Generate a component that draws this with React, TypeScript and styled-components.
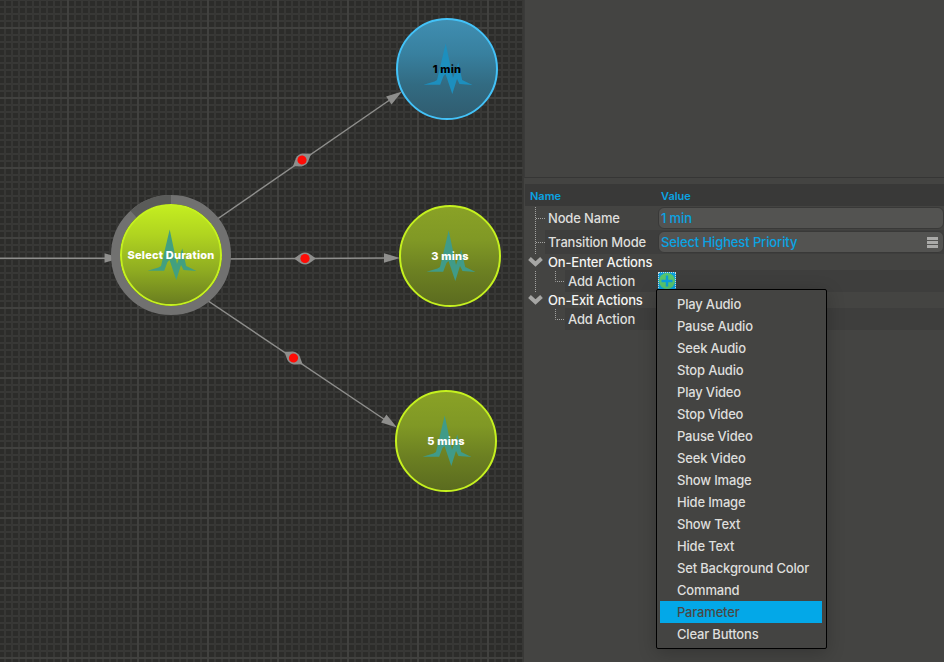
import React from 'react';
import styled, { createGlobalStyle } from 'styled-components';

const GlobalStyle = createGlobalStyle`
  * { box-sizing: border-box; }
  body { margin: 0; background: #444442; overflow: hidden; }
`;

const Window = styled.div`
  display: flex;
  width: 944px;
  height: 662px;
  overflow: hidden;
  font-family: Inter, 'Liberation Sans', sans-serif;
`;

const Canvas = styled.main`
  position: relative;
  flex: 0 0 524px;
  overflow: hidden;
  border-right: 1px solid #393937;
  background-color: #2c2c2a;
  background-image:
    linear-gradient(90deg, #41413f 2px, transparent 2px),
    linear-gradient(#41413f 2px, transparent 2px),
    linear-gradient(90deg, #373735 2px, transparent 2px),
    linear-gradient(#383836 2px, transparent 2px);
  background-size: 70px 70px, 70px 70px, 7px 7px, 7px 7px;
  background-position: 67px 27px, 67px 27px, 4px 6px, 4px 6px;
`;

const Edges = styled.svg`
  position: absolute;
  inset: 0;
`;

const Node = styled.div<{ $x: number; $y: number; $tone: 'blue' | 'olive' | 'lime' }>`
  position: absolute;
  left: ${p => p.$x - 51}px;
  top: ${p => p.$y - 51}px;
  width: 102px;
  height: 102px;
  display: flex;
  align-items: center;
  justify-content: center;
  border-radius: 50%;
  border: 2px solid ${p => (p.$tone === 'blue' ? '#43c2f8' : '#c5f11f')};
  background: ${p =>
    ({
      blue: 'linear-gradient(#408fb2, #38809f 35%, #326b82 65%, #305b6e)',
      olive: 'linear-gradient(#8aa226, #809825 35%, #6c8022 65%, #5a6a1f)',
      lime: 'linear-gradient(#c5ef20, #b0d420 30%, #8fac21 65%, #687b20)',
    })[p.$tone]} border-box;
  color: ${p => (p.$tone === 'blue' ? '#000' : '#fff')};
`;

const PulseIcon = styled.svg`
  position: absolute;
  inset: -2px;
`;

const NodeLabel = styled.span`
  position: relative;
  font-size: 11px;
  line-height: 14px;
  font-weight: 800;
  letter-spacing: 0.22px;
  white-space: nowrap;
`;

const Inspector = styled.aside`
  position: relative;
  flex: 1;
  display: flex;
  flex-direction: column;
  background: #444442;
  color: #dededc;
  font-size: 13px;
  font-weight: 500;
  letter-spacing: -0.12px;
`;

const Preview = styled.div`
  height: 178px;
  border-bottom: 1px solid #363635;
  border-left: 1px solid #3b3b3a;
`;

const TableHead = styled.div`
  display: grid;
  grid-template-columns: 131px 1fr;
  align-items: center;
  height: 22px;
  margin: 6px 0 0 1px;
  padding: 2px 0 0 5px;
  background: #393938;
  color: #0aa3e3;
  font-size: 11px;
  font-weight: 600;
  line-height: 20px;
  letter-spacing: 0;
`;

const Row = styled.div<{ $height: number; $indent: number; $dark?: boolean }>`
  display: flex;
  align-items: center;
  height: ${p => p.$height}px;
  margin-left: ${p => p.$indent - 3}px;
  background: ${p => (p.$dark ? '#3e3e3d' : 'transparent')};
`;

const RowName = styled.span<{ $indent: number; $bright?: boolean }>`
  flex: 0 0 ${p => 133 - p.$indent}px;
  margin-left: 3px;
  margin-top: -1px;
  line-height: 16px;
  letter-spacing: -0.16px;
  white-space: nowrap;
  color: ${p => (p.$bright ? '#f4f4f2' : '#dededc')};
`;

const Field = styled.div`
  flex: 1;
  display: flex;
  align-items: center;
  justify-content: space-between;
  height: 22px;
  padding: 0 5px 1px 2px;
  border: 1px solid #393938;
  border-radius: 6px;
  background: #535351;
  color: #0aa3e3;
`;

const MenuBars = styled.span`
  width: 11px;
  height: 11px;
  margin-top: 1px;
  background: repeating-linear-gradient(#aaaaa8 0 3px, transparent 3px 4px);
`;

const TreeLines = styled.svg`
  position: absolute;
  left: 0;
  top: 206px;
`;

const AddButton = styled.button`
  display: flex;
  align-items: center;
  justify-content: center;
  width: 18px;
  height: 18px;
  padding: 0;
  border: 1px dotted #c8d8de;
  background: #0a9fdd;
`;

const AddIcon = styled.svg`
  flex: none;
  display: block;
`;

const Menu = styled.ul`
  position: absolute;
  left: 132px;
  top: 289px;
  width: 171px;
  height: 360px;
  margin: 0;
  padding: 3px;
  list-style: none;
  border: 1px solid #000;
  border-radius: 2px;
  background: #444442;
  box-shadow: 0 4px 18px rgba(0, 0, 0, 0.22);
`;

const MenuItem = styled.li<{ $active?: boolean }>`
  height: 22px;
  padding-left: 17px;
  margin-right: 1px;
  line-height: 22px;
  letter-spacing: -0.18px;
  white-space: nowrap;
  background: ${p => (p.$active ? '#03a8e8' : 'transparent')};
  color: ${p => (p.$active ? '#484846' : '#dededc')};
`;

const actions = [
  'Play Audio', 'Pause Audio', 'Seek Audio', 'Stop Audio', 'Play Video', 'Stop Video',
  'Pause Video', 'Seek Video', 'Show Image', 'Hide Image', 'Show Text', 'Hide Text',
  'Set Background Color', 'Command', 'Parameter', 'Clear Buttons',
];

function Pulse({ color }: { color: string }) {
  return (
    <PulseIcon width="102" height="102">
      <path
        d="M27.5 66.8 L38.5 63.6 L41 62 L49.7 25.5 L57 60 L62.3 44.5 L66.2 62 L76.5 67 L63.5 66 L61 61 L56.3 76 L49.5 56 L47.5 58 L44.2 66.8 Z"
        fill={color}
      />
    </PulseIcon>
  );
}

function Marker({ x, y, angle }: { x: number; y: number; angle: number }) {
  return (
    <g transform={`translate(${x} ${y}) rotate(${angle})`}>
      <path d="M-11 0 L-4 -5 Q0 -7 4 -5 L11 0 L4 5 Q0 7 -4 5 Z" fill="#8e8e8c" />
      <circle r="4.6" fill="#ff0c06" />
    </g>
  );
}

function Arrow({ x, y, angle }: { x: number; y: number; angle: number }) {
  return <path d="M0 0 L-16 -4.8 L-16 4.8 Z" fill="#8e8e8c" transform={`translate(${x} ${y}) rotate(${angle})`} />;
}

export default function App() {
  return (
    <>
      <GlobalStyle />
      <Window>
        <Canvas>
          <Edges width="524" height="662">
            <g stroke="#8e8e8c" strokeWidth="1.5">
              <path d="M0 258.2 H118" />
              <path d="M171 251 L394 97" />
              <path d="M171 259.2 L390 258" />
              <path d="M171 276 L386 420.5" />
            </g>
            <Arrow x={120.5} y={258} angle={0} />
            <Arrow x={402} y={91.5} angle={-34.5} />
            <Arrow x={400} y={258} angle={0} />
            <Arrow x={397} y={427.5} angle={34} />
            <Marker x={302} y={160} angle={-34.5} />
            <Marker x={305} y={258.5} angle={0} />
            <Marker x={293.5} y={358} angle={34} />
            <circle cx="171" cy="255" r="55.5" fill="none" stroke="#717170" strokeWidth="9" />
            <path d="M133.5 214.1 A55.5 55.5 0 0 1 171 199.5" fill="none" stroke="#5a5b59" strokeWidth="9" />
          </Edges>
          <Node $x={447} $y={69} $tone="blue">
            <Pulse color="#1d8fbe" />
            <NodeLabel>1 min</NodeLabel>
          </Node>
          <Node $x={171} $y={255} $tone="lime">
            <Pulse color="#42a080" />
            <NodeLabel>Select Duration</NodeLabel>
          </Node>
          <Node $x={450} $y={256} $tone="olive">
            <Pulse color="#409b88" />
            <NodeLabel>3 mins</NodeLabel>
          </Node>
          <Node $x={446} $y={441} $tone="olive">
            <Pulse color="#409b88" />
            <NodeLabel>5 mins</NodeLabel>
          </Node>
        </Canvas>

        <Inspector>
          <Preview />
          <TableHead>
            <span>Name</span>
            <span>Value</span>
          </TableHead>
          <Row $height={24} $indent={24}>
            <RowName $indent={23}>Node Name</RowName>
            <Field>1 min</Field>
          </Row>
          <Row $height={24} $indent={24} $dark>
            <RowName $indent={23}>Transition Mode</RowName>
            <Field>
              Select Highest Priority
              <MenuBars />
            </Field>
          </Row>
          <Row $height={16} $indent={24}>
            <RowName $indent={23} $bright>On-Enter Actions</RowName>
          </Row>
          <Row $height={22} $indent={44} $dark>
            <RowName $indent={43}>Add Action</RowName>
            <AddButton aria-label="Add enter action">
              <AddIcon width="16" height="16">
                <circle cx="8" cy="8" r="8" fill="#58c56c" />
                <path d="M8 2.5 V13.5 M2.5 8 H13.5" stroke="#0a9fdd" strokeWidth="2.4" />
              </AddIcon>
            </AddButton>
          </Row>
          <Row $height={16} $indent={24}>
            <RowName $indent={23} $bright>On-Exit Actions</RowName>
          </Row>
          <Row $height={22} $indent={44} $dark>
            <RowName $indent={43}>Add Action</RowName>
          </Row>

          <TreeLines width="60" height="124" fill="none">
            <g stroke="#a2a2a0" strokeDasharray="1 1">
              <path d="M11.5 1 V48 M12 12.5 H21 M12 36.5 H21 M11.5 65 V86" />
              <path d="M31.5 65 V75.5 H40 M31.5 103 V113.5 H40" />
            </g>
            <path d="M5.5 52.5 L11.5 58 L17.5 52.5 M5.5 90.5 L11.5 96 L17.5 90.5" stroke="#a6a6a4" strokeWidth="4" />
          </TreeLines>

          <Menu>
            {actions.map(a => (
              <MenuItem key={a} $active={a === 'Parameter'}>{a}</MenuItem>
            ))}
          </Menu>
        </Inspector>
      </Window>
    </>
  );
}
